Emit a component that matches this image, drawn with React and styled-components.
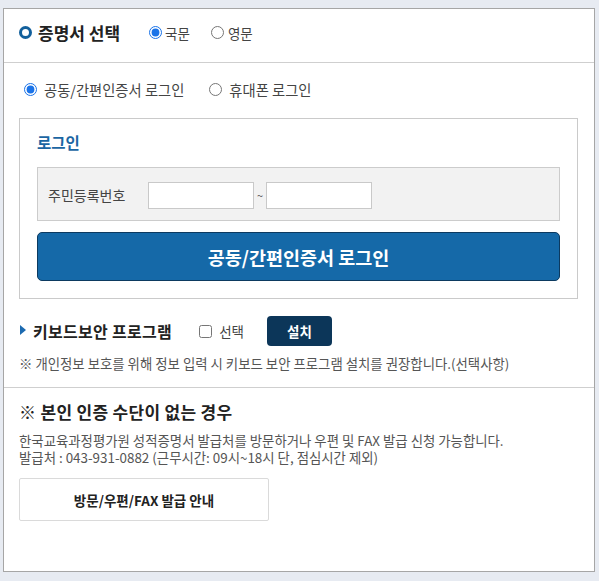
import React from 'react';
import styled, { createGlobalStyle } from 'styled-components';

const GlobalStyle = createGlobalStyle`
  html, body {
    margin: 0;
    padding: 0;
    background: #e7ebf2;
  }
  body {
    font-family: 'Noto Sans CJK KR', 'Noto Sans', sans-serif;
    color: #333;
  }
  * { box-sizing: border-box; }
`;

const Page = styled.div`
  padding: 8px 4px 9px 3px;
`;

const Panel = styled.div`
  background: #fff;
  border: 1px solid #a6a6a6;
  height: 564px;
`;

const Header = styled.div`
  display: flex;
  align-items: center;
  height: 54px;
  padding: 0 0 6px 15px;
  border-bottom: 1px solid #cfcfcf;
`;

const RingIcon = styled.span`
  width: 13px;
  height: 13px;
  border: 3.5px solid #12609c;
  border-radius: 50%;
  margin-right: 6px;
`;

const HeaderTitle = styled.h1`
  margin: 0 29px 0 0;
  font-size: 17px;
  font-weight: 700;
  color: #222;
  line-height: 20px;
`;

const RadioGroup = styled.div`
  display: flex;
  align-items: center;
  gap: ${(p) => p.$gap || 16}px;
`;

const Option = styled.label`
  display: flex;
  align-items: center;
  font-size: ${(p) => p.$size || 13.5}px;
  color: #444;
  cursor: pointer;

  input {
    margin: 0 ${(p) => p.$space || 4}px 0 0;
    width: 13px;
    height: 13px;
    accent-color: #1a73e8;
  }
`;

const Body = styled.div`
  padding: 0 16px 0 15px;
`;

const LoginTypeRow = styled.div`
  padding: 16px 0 0 5px;
  height: 55px;
`;

const LoginBox = styled.div`
  border: 1px solid #cacaca;
  padding: 13px 17px 17px;
`;

const BoxTitle = styled.h2`
  margin: 0 0 15px;
  font-size: 15.5px;
  font-weight: 700;
  color: #1b66a3;
  line-height: 20px;
`;

const FieldBox = styled.div`
  display: flex;
  align-items: center;
  height: 54px;
  padding: 2px 10px 0;
  background: #f2f2f2;
  border: 1px solid #cccccc;
`;

const FieldLabel = styled.span`
  width: 100px;
  font-size: 14px;
  color: #444;
`;

const TextInput = styled.input`
  width: 106px;
  height: 27px;
  border: 1px solid #c9c9c9;
  background: #fff;
  padding: 0 4px;
  font-size: 13px;
`;

const Tilde = styled.span`
  width: 12px;
  text-align: center;
  font-size: 11px;
  color: #555;
`;

const PrimaryButton = styled.button`
  display: block;
  width: 100%;
  height: 49px;
  margin-top: 11px;
  border: 1px solid #0c3a60;
  border-radius: 5px;
  background: #1569a8;
  color: #fff;
  font-family: inherit;
  font-size: 18.5px;
  font-weight: 700;
  cursor: pointer;
`;

const SecuritySection = styled.div`
  padding: 17px 0 0 0;
  height: 88px;
`;

const SecurityRow = styled.div`
  display: flex;
  align-items: center;
  height: 30px;
`;

const Triangle = styled.span`
  width: 0;
  height: 0;
  border-top: 5px solid transparent;
  border-bottom: 5px solid transparent;
  border-left: 6px solid #1c6ab0;
  margin: -3px 7px 0 1px;
`;

const SectionTitle = styled.h3`
  margin: 0 27px 0 0;
  font-size: ${(p) => p.$size || 16}px;
  font-weight: 700;
  color: #222;
  line-height: 20px;
  letter-spacing: 0.3px;
`;

const InstallButton = styled.button`
  width: 65px;
  height: 30px;
  margin-left: 23px;
  border: none;
  border-radius: 4px;
  background: #0c3659;
  color: #fff;
  font-family: inherit;
  font-size: 13.5px;
  font-weight: 700;
  cursor: pointer;
`;

const Note = styled.p`
  margin: 8px 0 0;
  font-size: 13.4px;
  color: #555;
  line-height: 18px;
  white-space: nowrap;
`;

const Divider = styled.div`
  border-top: 1px solid #cfcfcf;
`;

const NoAuthSection = styled.div`
  padding: 14px 0 0 15px;
`;

const Desc = styled.p`
  margin: 10px 0 0;
  font-size: 13.4px;
  color: #555;
  line-height: 16.5px;
  white-space: nowrap;
`;

const GuideButton = styled.button`
  display: block;
  width: 250px;
  height: 43px;
  margin-top: 13px;
  border: 1px solid #dadada;
  border-radius: 2px;
  background: #fff;
  color: #222;
  font-family: inherit;
  font-size: 13.5px;
  font-weight: 700;
  cursor: pointer;
`;

export default function App() {
  return (
    <>
      <GlobalStyle />
      <Page>
        <Panel>
          <Header>
            <RingIcon />
            <HeaderTitle>증명서 선택</HeaderTitle>
            <RadioGroup $gap={21}>
              <Option $space={3}>
                <input type="radio" name="lang" defaultChecked />
                국문
              </Option>
              <Option $space={4}>
                <input type="radio" name="lang" />
                영문
              </Option>
            </RadioGroup>
          </Header>

          <Body>
            <LoginTypeRow>
              <RadioGroup $gap={25}>
                <Option $size={14.3} $space={7}>
                  <input type="radio" name="login" defaultChecked />
                  공동/간편인증서 로그인
                </Option>
                <Option $size={14.3} $space={7}>
                  <input type="radio" name="login" />
                  휴대폰 로그인
                </Option>
              </RadioGroup>
            </LoginTypeRow>

            <LoginBox>
              <BoxTitle>로그인</BoxTitle>
              <FieldBox>
                <FieldLabel>주민등록번호</FieldLabel>
                <TextInput type="text" />
                <Tilde>~</Tilde>
                <TextInput type="password" />
              </FieldBox>
              <PrimaryButton>공동/간편인증서 로그인</PrimaryButton>
            </LoginBox>

            <SecuritySection>
              <SecurityRow>
                <Triangle />
                <SectionTitle>키보드보안 프로그램</SectionTitle>
                <Option $space={7}>
                  <input type="checkbox" />
                  선택
                </Option>
                <InstallButton>설치</InstallButton>
              </SecurityRow>
              <Note>※ 개인정보 보호를 위해 정보 입력 시 키보드 보안 프로그램 설치를 권장합니다.(선택사항)</Note>
            </SecuritySection>
          </Body>

          <Divider />

          <NoAuthSection>
            <SectionTitle $size={17}>※ 본인 인증 수단이 없는 경우</SectionTitle>
            <Desc>
              한국교육과정평가원 성적증명서 발급처를 방문하거나 우편 및 FAX 발급 신청 가능합니다.
              <br />
              발급처 : 043-931-0882 (근무시간: 09시~18시 단, 점심시간 제외)
            </Desc>
            <GuideButton>방문/우편/FAX 발급 안내</GuideButton>
          </NoAuthSection>
        </Panel>
      </Page>
    </>
  );
}
